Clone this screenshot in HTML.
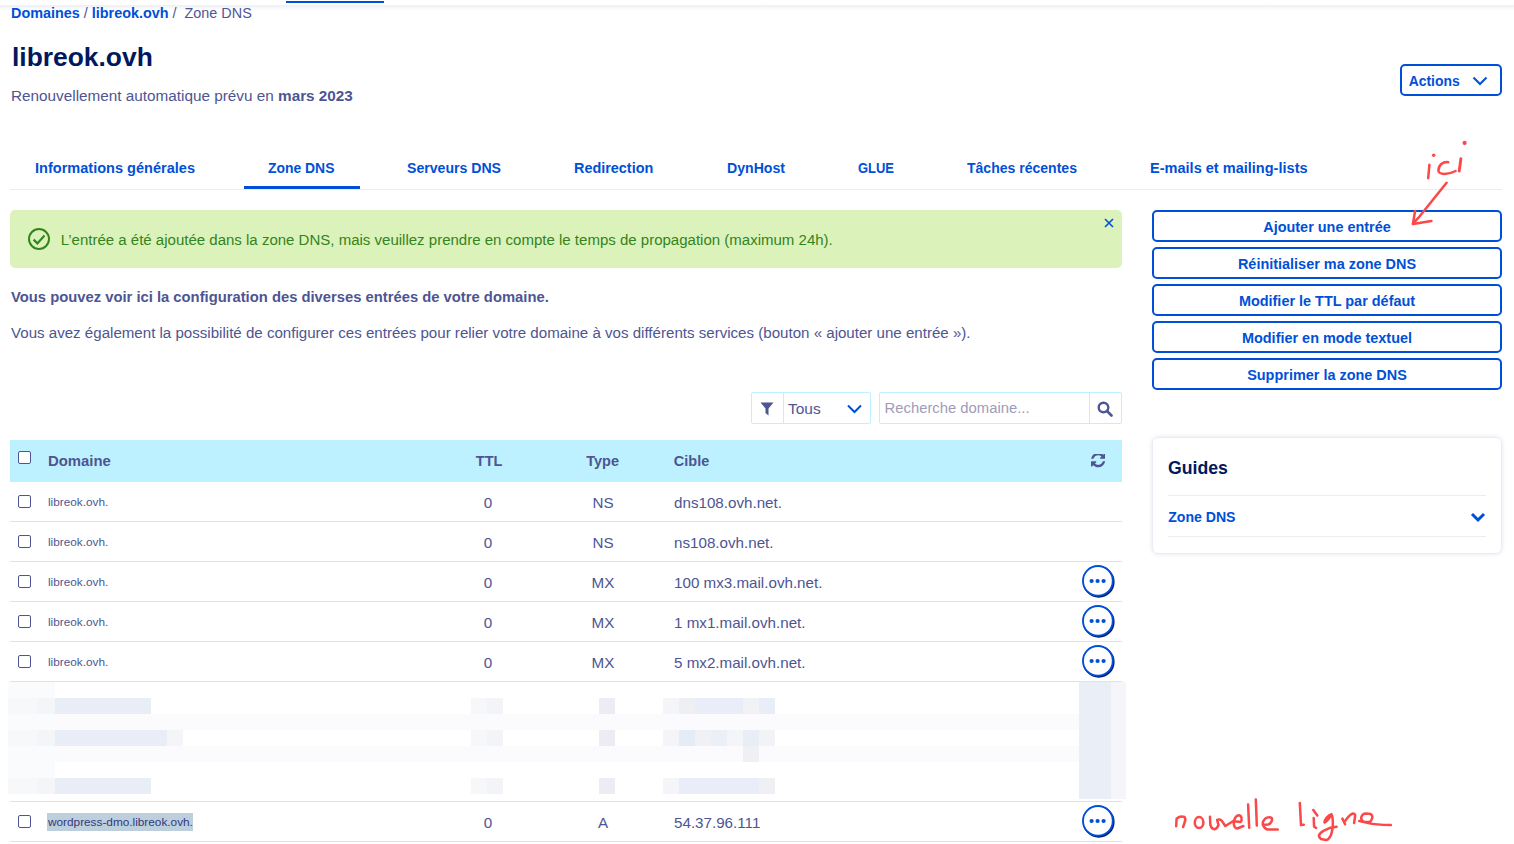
<!DOCTYPE html>
<html><head><meta charset="utf-8"><style>
html,body{margin:0;padding:0;background:#fff;width:1514px;height:844px;overflow:hidden;}
body{font-family:"Liberation Sans",sans-serif;color:#4d5592;position:relative;}
.t{position:absolute;white-space:nowrap;}
.b{position:absolute;}
b{font-weight:700;}
</style></head><body>
<div class="b" style="left:286px;top:1px;width:98px;height:2px;background:#0050d7;"></div>
<div class="b" style="left:0px;top:5px;width:1514px;height:5px;background:linear-gradient(#edeff4,#ffffff);"></div>
<div class="t" style="left:11px;top:5.81px;font-size:14.4px;line-height:14.4px;"><span style="color:#0050d7;font-weight:700">Domaines</span> / <span style="color:#0050d7;font-weight:700">libreok.ovh</span> /&nbsp; Zone DNS</div>
<div class="t" style="left:12px;top:44.35px;font-size:26.4px;line-height:26.4px;font-weight:700;color:#00185e;">libreok.ovh</div>
<div class="t" style="left:11px;top:87.75px;font-size:15.3px;line-height:15.3px;">Renouvellement automatique prévu en <b>mars 2023</b></div>
<div class="b" style="left:1400px;top:64px;width:102px;height:32px;border:2px solid #0050d7;border-radius:5px;box-sizing:border-box;"></div>
<div class="t" style="left:1408.7px;top:75.23px;font-size:13.9px;line-height:13.9px;font-weight:700;color:#0050d7;">Actions</div>
<svg class="b" style="left:1472px;top:76px" width="16" height="10" viewBox="0 0 16 10"><path d="M1.5 1.5 L8 8 L14.5 1.5" fill="none" stroke="#0050d7" stroke-width="2"/></svg>
<div class="t" style="left:35.0px;top:160.90px;font-size:14.3px;line-height:14.3px;font-weight:700;color:#0050d7;transform:scaleX(1.017);transform-origin:0 0;">Informations générales</div>
<div class="t" style="left:268.0px;top:160.90px;font-size:14.3px;line-height:14.3px;font-weight:700;color:#0050d7;transform:scaleX(0.972);transform-origin:0 0;">Zone DNS</div>
<div class="t" style="left:407.29999999999995px;top:160.90px;font-size:14.3px;line-height:14.3px;font-weight:700;color:#0050d7;transform:scaleX(0.986);transform-origin:0 0;">Serveurs DNS</div>
<div class="t" style="left:574.4px;top:160.90px;font-size:14.3px;line-height:14.3px;font-weight:700;color:#0050d7;transform:scaleX(1.008);transform-origin:0 0;">Redirection</div>
<div class="t" style="left:727.4px;top:160.90px;font-size:14.3px;line-height:14.3px;font-weight:700;color:#0050d7;transform:scaleX(0.987);transform-origin:0 0;">DynHost</div>
<div class="t" style="left:858.1px;top:160.90px;font-size:14.3px;line-height:14.3px;font-weight:700;color:#0050d7;transform:scaleX(0.906);transform-origin:0 0;">GLUE</div>
<div class="t" style="left:967.4px;top:160.90px;font-size:14.3px;line-height:14.3px;font-weight:700;color:#0050d7;transform:scaleX(0.981);transform-origin:0 0;">Tâches récentes</div>
<div class="t" style="left:1150.2px;top:160.90px;font-size:14.3px;line-height:14.3px;font-weight:700;color:#0050d7;transform:scaleX(1.017);transform-origin:0 0;">E-mails et mailing-lists</div>
<div class="b" style="left:10px;top:189px;width:1492px;height:1px;background:#e8ecf4;"></div>
<div class="b" style="left:244px;top:186px;width:116px;height:3px;background:#0050d7;"></div>
<div class="b" style="left:10px;top:210px;width:1112px;height:58px;background:#dcf2bb;border-radius:5px;"></div>
<svg class="b" style="left:27px;top:227px" width="24" height="24" viewBox="0 0 24 24"><circle cx="12" cy="12" r="10" fill="none" stroke="#34841c" stroke-width="2"/><path d="M6.6 12.6 L10.4 16.4 L17.5 8.6" fill="none" stroke="#34841c" stroke-width="2.2"/></svg>
<div class="t" style="left:60.7px;top:231.78px;font-size:15.03px;line-height:15.03px;color:#34841c;">L’entrée a été ajoutée dans la zone DNS, mais veuillez prendre en compte le temps de propagation (maximum 24h).</div>
<svg class="b" style="left:1104px;top:218px" width="10" height="10" viewBox="0 0 10 10"><path d="M1 1 L9 9 M9 1 L1 9" fill="none" stroke="#0050d7" stroke-width="1.6"/></svg>
<div class="t" style="left:11px;top:290.48px;font-size:14.79px;line-height:14.79px;font-weight:700;">Vous pouvez voir ici la configuration des diverses entrées de votre domaine.</div>
<div class="t" style="left:11px;top:324.82px;font-size:15.1px;line-height:15.1px;">Vous avez également la possibilité de configurer ces entrées pour relier votre domaine à vos différents services (bouton « ajouter une entrée »).</div>
<div class="b" style="left:1152px;top:210px;width:350px;height:32px;border:2px solid #0050d7;border-radius:5px;box-sizing:border-box;"></div>
<div class="t" style="left:927px;width:800px;text-align:center;top:219.77px;font-size:14.45px;line-height:14.45px;font-weight:700;color:#0050d7;">Ajouter une entrée</div>
<div class="b" style="left:1152px;top:247px;width:350px;height:32px;border:2px solid #0050d7;border-radius:5px;box-sizing:border-box;"></div>
<div class="t" style="left:927px;width:800px;text-align:center;top:256.77px;font-size:14.45px;line-height:14.45px;font-weight:700;color:#0050d7;">Réinitialiser ma zone DNS</div>
<div class="b" style="left:1152px;top:284px;width:350px;height:32px;border:2px solid #0050d7;border-radius:5px;box-sizing:border-box;"></div>
<div class="t" style="left:927px;width:800px;text-align:center;top:293.77px;font-size:14.45px;line-height:14.45px;font-weight:700;color:#0050d7;">Modifier le TTL par défaut</div>
<div class="b" style="left:1152px;top:321px;width:350px;height:32px;border:2px solid #0050d7;border-radius:5px;box-sizing:border-box;"></div>
<div class="t" style="left:927px;width:800px;text-align:center;top:330.77px;font-size:14.45px;line-height:14.45px;font-weight:700;color:#0050d7;">Modifier en mode textuel</div>
<div class="b" style="left:1152px;top:358px;width:350px;height:32px;border:2px solid #0050d7;border-radius:5px;box-sizing:border-box;"></div>
<div class="t" style="left:927px;width:800px;text-align:center;top:367.77px;font-size:14.45px;line-height:14.45px;font-weight:700;color:#0050d7;">Supprimer la zone DNS</div>
<div class="b" style="left:751px;top:392px;width:120px;height:32px;border:1px solid #bef1ff;box-sizing:border-box;border-radius:2px;"></div>
<div class="b" style="left:783px;top:392px;width:1px;height:32px;background:#bef1ff;"></div>
<svg class="b" style="left:760px;top:402px" width="14" height="14" viewBox="0 0 14 14"><path d="M0.5 0.5 H13.5 L8.5 6.5 V13.5 L5.5 11 V6.5 Z" fill="#4d5592"/></svg>
<div class="t" style="left:788px;top:400.98px;font-size:15.5px;line-height:15.5px;">Tous</div>
<svg class="b" style="left:847px;top:404px" width="15" height="10" viewBox="0 0 15 10"><path d="M1 1.5 L7.5 8 L14 1.5" fill="none" stroke="#0050d7" stroke-width="2"/></svg>
<div class="b" style="left:879px;top:392px;width:243px;height:32px;border:1px solid #bef1ff;box-sizing:border-box;border-radius:2px;"></div>
<div class="b" style="left:1089px;top:392px;width:1px;height:32px;background:#bef1ff;"></div>
<div class="t" style="left:884.6px;top:401.45px;font-size:14.82px;line-height:14.82px;color:#a09cb8;">Recherche domaine...</div>
<svg class="b" style="left:1097px;top:401px" width="16" height="16" viewBox="0 0 16 16"><circle cx="6.5" cy="6.5" r="4.8" fill="none" stroke="#4d5592" stroke-width="2.4"/><path d="M10 10 L14.5 14.5" stroke="#4d5592" stroke-width="2.6" stroke-linecap="round"/></svg>
<div class="b" style="left:10px;top:440px;width:1112px;height:42px;background:#bef1ff;"></div>
<div class="b" style="left:18px;top:451px;width:13px;height:13px;border:1px solid #4d5592;border-radius:2px;box-sizing:border-box;background:#fff;"></div>
<div class="t" style="left:48px;top:453.69px;font-size:14.9px;line-height:14.9px;font-weight:700;">Domaine</div>
<div class="t" style="left:475.8px;top:453.53px;font-size:14.5px;line-height:14.5px;font-weight:700;">TTL</div>
<div class="t" style="left:586.2px;top:453.53px;font-size:14.5px;line-height:14.5px;font-weight:700;">Type</div>
<div class="t" style="left:673.8px;top:453.53px;font-size:14.5px;line-height:14.5px;font-weight:700;">Cible</div>
<svg class="b" style="left:1090.5px;top:453.8px" width="14.4" height="13.8" viewBox="0 128 1536 1472"><path fill="#4d5592" d="M1511 928q0 5-1 7-64 268-268 434.5t-478 166.5q-146 0-282.5-55t-243.5-157l-129 129q-19 19-45 19t-45-19-19-45v-448q0-26 19-45t45-19h448q26 0 45 19t19 45-19 45l-137 137q71 66 161 102t187 36q134 0 250-65t186-179q11-17 53-117 8-23 30-23h192q13 0 22.5 9.5t9.5 22.5zm25-800v448q0 26-19 45t-45 19h-448q-26 0-45-19t-19-45 19-45l138-138q-148-137-349-137-134 0-250 65t-186 179q-11 17-53 117-8 23-30 23h-199q-13 0-22.5-9.5t-9.5-22.5v-7q65-268 270-434.5t480-166.5q146 0 284 55.5t245 156.5l130-129q19-19 45-19t45 19 19 45z"/></svg>
<div class="b" style="left:18px;top:495px;width:13px;height:13px;border:1px solid #4d5592;border-radius:2px;box-sizing:border-box;"></div>
<div class="t" style="left:48px;top:496.61px;font-size:11.8px;line-height:11.8px;">libreok.ovh.</div>
<div class="t" style="left:88px;width:800px;text-align:center;top:494.93px;font-size:15.2px;line-height:15.2px;">0</div>
<div class="t" style="left:203px;width:800px;text-align:center;top:494.93px;font-size:15.2px;line-height:15.2px;">NS</div>
<div class="t" style="left:674px;top:494.95px;font-size:15.18px;line-height:15.18px;">dns108.ovh.net.</div>
<div class="b" style="left:10px;top:521px;width:1112px;height:1px;background:#bef1ff;"></div>
<div class="b" style="left:18px;top:535px;width:13px;height:13px;border:1px solid #4d5592;border-radius:2px;box-sizing:border-box;"></div>
<div class="t" style="left:48px;top:536.61px;font-size:11.8px;line-height:11.8px;">libreok.ovh.</div>
<div class="t" style="left:88px;width:800px;text-align:center;top:534.93px;font-size:15.2px;line-height:15.2px;">0</div>
<div class="t" style="left:203px;width:800px;text-align:center;top:534.93px;font-size:15.2px;line-height:15.2px;">NS</div>
<div class="t" style="left:674px;top:534.95px;font-size:15.18px;line-height:15.18px;">ns108.ovh.net.</div>
<div class="b" style="left:10px;top:561px;width:1112px;height:1px;background:#bef1ff;"></div>
<div class="b" style="left:18px;top:575px;width:13px;height:13px;border:1px solid #4d5592;border-radius:2px;box-sizing:border-box;"></div>
<div class="t" style="left:48px;top:576.61px;font-size:11.8px;line-height:11.8px;">libreok.ovh.</div>
<div class="t" style="left:88px;width:800px;text-align:center;top:574.93px;font-size:15.2px;line-height:15.2px;">0</div>
<div class="t" style="left:203px;width:800px;text-align:center;top:574.93px;font-size:15.2px;line-height:15.2px;">MX</div>
<div class="t" style="left:674px;top:574.95px;font-size:15.18px;line-height:15.18px;">100 mx3.mail.ovh.net.</div>
<div class="b" style="left:10px;top:601px;width:1112px;height:1px;background:#bef1ff;"></div>
<svg class="b" style="left:1081px;top:564px" width="36" height="36" viewBox="0 0 36 36"><circle cx="17.8" cy="17.9" r="14.8" fill="none" stroke="#00185e" stroke-width="2"/><circle cx="16.9" cy="16.9" r="14.9" fill="#fff" stroke="#0050d7" stroke-width="1.9"/><circle cx="10.6" cy="17" r="2.1" fill="#0050d7"/><circle cx="16.6" cy="17" r="2.1" fill="#0050d7"/><circle cx="22.6" cy="17" r="2.1" fill="#0050d7"/></svg>
<div class="b" style="left:18px;top:615px;width:13px;height:13px;border:1px solid #4d5592;border-radius:2px;box-sizing:border-box;"></div>
<div class="t" style="left:48px;top:616.61px;font-size:11.8px;line-height:11.8px;">libreok.ovh.</div>
<div class="t" style="left:88px;width:800px;text-align:center;top:614.93px;font-size:15.2px;line-height:15.2px;">0</div>
<div class="t" style="left:203px;width:800px;text-align:center;top:614.93px;font-size:15.2px;line-height:15.2px;">MX</div>
<div class="t" style="left:674px;top:614.95px;font-size:15.18px;line-height:15.18px;">1 mx1.mail.ovh.net.</div>
<div class="b" style="left:10px;top:641px;width:1112px;height:1px;background:#bef1ff;"></div>
<svg class="b" style="left:1081px;top:604px" width="36" height="36" viewBox="0 0 36 36"><circle cx="17.8" cy="17.9" r="14.8" fill="none" stroke="#00185e" stroke-width="2"/><circle cx="16.9" cy="16.9" r="14.9" fill="#fff" stroke="#0050d7" stroke-width="1.9"/><circle cx="10.6" cy="17" r="2.1" fill="#0050d7"/><circle cx="16.6" cy="17" r="2.1" fill="#0050d7"/><circle cx="22.6" cy="17" r="2.1" fill="#0050d7"/></svg>
<div class="b" style="left:18px;top:655px;width:13px;height:13px;border:1px solid #4d5592;border-radius:2px;box-sizing:border-box;"></div>
<div class="t" style="left:48px;top:656.61px;font-size:11.8px;line-height:11.8px;">libreok.ovh.</div>
<div class="t" style="left:88px;width:800px;text-align:center;top:654.93px;font-size:15.2px;line-height:15.2px;">0</div>
<div class="t" style="left:203px;width:800px;text-align:center;top:654.93px;font-size:15.2px;line-height:15.2px;">MX</div>
<div class="t" style="left:674px;top:654.95px;font-size:15.18px;line-height:15.18px;">5 mx2.mail.ovh.net.</div>
<div class="b" style="left:10px;top:681px;width:1112px;height:1px;background:#bef1ff;"></div>
<svg class="b" style="left:1081px;top:644px" width="36" height="36" viewBox="0 0 36 36"><circle cx="17.8" cy="17.9" r="14.8" fill="none" stroke="#00185e" stroke-width="2"/><circle cx="16.9" cy="16.9" r="14.9" fill="#fff" stroke="#0050d7" stroke-width="1.9"/><circle cx="10.6" cy="17" r="2.1" fill="#0050d7"/><circle cx="16.6" cy="17" r="2.1" fill="#0050d7"/><circle cx="22.6" cy="17" r="2.1" fill="#0050d7"/></svg>
<div class="b" style="left:8px;top:714px;width:1118px;height:16px;background:#fbfbfd;"></div>
<div class="b" style="left:8px;top:746px;width:1118px;height:16px;background:#fbfbfd;"></div>
<div class="b" style="left:8px;top:682px;width:47px;height:112px;background:#fafbfc;"></div>
<div class="b" style="left:8px;top:698px;width:47px;height:16px;background:#f7f8fa;"></div>
<div class="b" style="left:38px;top:698px;width:17px;height:16px;background:#f4f5f8;"></div>
<div class="b" style="left:55px;top:698px;width:96px;height:16px;background:#e9edf6;"></div>
<div class="b" style="left:471px;top:698px;width:16px;height:16px;background:#f6f7f9;"></div>
<div class="b" style="left:487px;top:698px;width:16px;height:16px;background:#f3f4f7;"></div>
<div class="b" style="left:599px;top:698px;width:16px;height:16px;background:#ebedf3;"></div>
<div class="b" style="left:663px;top:698px;width:16px;height:16px;background:#f4f5f8;"></div>
<div class="b" style="left:8px;top:730px;width:47px;height:16px;background:#f7f8fa;"></div>
<div class="b" style="left:38px;top:730px;width:17px;height:16px;background:#f4f5f8;"></div>
<div class="b" style="left:55px;top:730px;width:96px;height:16px;background:#e9edf6;"></div>
<div class="b" style="left:471px;top:730px;width:16px;height:16px;background:#f6f7f9;"></div>
<div class="b" style="left:487px;top:730px;width:16px;height:16px;background:#f3f4f7;"></div>
<div class="b" style="left:599px;top:730px;width:16px;height:16px;background:#ebedf3;"></div>
<div class="b" style="left:663px;top:730px;width:16px;height:16px;background:#f4f5f8;"></div>
<div class="b" style="left:8px;top:778px;width:47px;height:16px;background:#f7f8fa;"></div>
<div class="b" style="left:38px;top:778px;width:17px;height:16px;background:#f4f5f8;"></div>
<div class="b" style="left:55px;top:778px;width:96px;height:16px;background:#e9edf6;"></div>
<div class="b" style="left:471px;top:778px;width:16px;height:16px;background:#f6f7f9;"></div>
<div class="b" style="left:487px;top:778px;width:16px;height:16px;background:#f3f4f7;"></div>
<div class="b" style="left:599px;top:778px;width:16px;height:16px;background:#ebedf3;"></div>
<div class="b" style="left:663px;top:778px;width:16px;height:16px;background:#f4f5f8;"></div>
<div class="b" style="left:151px;top:730px;width:16px;height:16px;background:#e9edf6;"></div>
<div class="b" style="left:167px;top:730px;width:16px;height:16px;background:#f4f5f8;"></div>
<div class="b" style="left:679px;top:698px;width:16px;height:16px;background:#eeeff3;"></div>
<div class="b" style="left:695px;top:698px;width:16px;height:16px;background:#e8edf7;"></div>
<div class="b" style="left:711px;top:698px;width:16px;height:16px;background:#e8edf7;"></div>
<div class="b" style="left:727px;top:698px;width:16px;height:16px;background:#e8edf7;"></div>
<div class="b" style="left:743px;top:698px;width:16px;height:16px;background:#f1f2f6;"></div>
<div class="b" style="left:759px;top:698px;width:16px;height:16px;background:#e8edf7;"></div>
<div class="b" style="left:679px;top:730px;width:16px;height:16px;background:#e6ecf7;"></div>
<div class="b" style="left:695px;top:730px;width:16px;height:16px;background:#eff1f5;"></div>
<div class="b" style="left:711px;top:730px;width:16px;height:16px;background:#ebeff6;"></div>
<div class="b" style="left:727px;top:730px;width:16px;height:16px;background:#f4f5f8;"></div>
<div class="b" style="left:743px;top:730px;width:16px;height:16px;background:#e9edf5;"></div>
<div class="b" style="left:759px;top:730px;width:16px;height:16px;background:#f2f3f7;"></div>
<div class="b" style="left:679px;top:778px;width:16px;height:16px;background:#e8edf7;"></div>
<div class="b" style="left:695px;top:778px;width:16px;height:16px;background:#e8edf7;"></div>
<div class="b" style="left:711px;top:778px;width:16px;height:16px;background:#e8edf7;"></div>
<div class="b" style="left:727px;top:778px;width:16px;height:16px;background:#e8edf7;"></div>
<div class="b" style="left:743px;top:778px;width:16px;height:16px;background:#e8edf7;"></div>
<div class="b" style="left:759px;top:778px;width:16px;height:16px;background:#eff0f4;"></div>
<div class="b" style="left:743px;top:746px;width:16px;height:16px;background:#eef0f4;"></div>
<div class="b" style="left:1079px;top:682px;width:32px;height:117px;background:#eaeff7;"></div>
<div class="b" style="left:1111px;top:682px;width:15px;height:117px;background:#f5f6f9;"></div>
<div class="b" style="left:10px;top:801px;width:1112px;height:1px;background:#bef1ff;"></div>
<div class="b" style="left:18px;top:815px;width:13px;height:13px;border:1px solid #4d5592;border-radius:2px;box-sizing:border-box;"></div>
<div class="b" style="left:47px;top:813px;width:146px;height:18px;background:#bdcedd;"></div>
<div class="t" style="left:48px;top:816.61px;font-size:11.8px;line-height:11.8px;color:#323a78;">wordpress-dmo.libreok.ovh.</div>
<div class="t" style="left:88px;width:800px;text-align:center;top:814.93px;font-size:15.2px;line-height:15.2px;">0</div>
<div class="t" style="left:203px;width:800px;text-align:center;top:814.93px;font-size:15.2px;line-height:15.2px;">A</div>
<div class="t" style="left:674px;top:814.95px;font-size:15.18px;line-height:15.18px;">54.37.96.111</div>
<div class="b" style="left:10px;top:841px;width:1112px;height:1px;background:#bef1ff;"></div>
<svg class="b" style="left:1081px;top:804px" width="36" height="36" viewBox="0 0 36 36"><circle cx="17.8" cy="17.9" r="14.8" fill="none" stroke="#00185e" stroke-width="2"/><circle cx="16.9" cy="16.9" r="14.9" fill="#fff" stroke="#0050d7" stroke-width="1.9"/><circle cx="10.6" cy="17" r="2.1" fill="#0050d7"/><circle cx="16.6" cy="17" r="2.1" fill="#0050d7"/><circle cx="22.6" cy="17" r="2.1" fill="#0050d7"/></svg>
<div class="b" style="left:1152px;top:437px;width:350px;height:117px;border:1px solid #e9ecf3;border-radius:6px;box-sizing:border-box;box-shadow:0 0 4px rgba(190,198,222,0.45);"></div>
<div class="t" style="left:1168.2px;top:457.92px;font-size:19px;line-height:19px;font-weight:700;color:#00185e;transform:scaleX(0.93);transform-origin:0 0;">Guides</div>
<div class="b" style="left:1168px;top:495px;width:318px;height:1px;background:#eceef3;"></div>
<div class="t" style="left:1168.2px;top:509.76px;font-size:14.1px;line-height:14.1px;font-weight:700;color:#0050d7;">Zone DNS</div>
<div class="b" style="left:1168px;top:536px;width:318px;height:1px;background:#eceef3;"></div>
<svg class="b" style="left:1470px;top:511px" width="16" height="12" viewBox="0 0 16 12"><path d="M2 3 L8 9 L14 3" fill="none" stroke="#0050d7" stroke-width="3"/></svg>
<svg class="b" style="left:0;top:0" width="1514" height="844" viewBox="0 0 1514 844">
<g fill="none" stroke="#fb4848" stroke-width="2.5" stroke-linecap="round" stroke-linejoin="round">
<path d="M1429.4 164.8 L1428.2 178.2"/>
<path d="M1448.3 162.2 C1443 161.5 1438.5 165 1438.4 170.5 C1438.8 175 1448 175 1455.6 171"/>
<path d="M1460.9 158.6 L1459.2 171" stroke-width="2.9"/>
<path d="M1446.6 182.8 L1418.5 217.7 L1412.9 223.9"/>
<path d="M1415.1 211 L1412.9 223.9 L1431.4 221.1"/>
<path d="M1176.2 826.2 L1176.6 818.6 C1179 816.5 1182 816 1184.5 817 C1186 818.5 1185.5 820.5 1183.1 827"/>
<ellipse cx="1199.1" cy="822.6" rx="4.3" ry="5.5"/>
<path d="M1210 816.7 L1210.3 824.9 Q1211.8 829.5 1214.6 829.2 Q1217.6 828.3 1218.5 824.9 L1217.1 819.9 Q1219.5 818.8 1221.7 820.6 L1225.3 826 L1233.4 821 L1240.5 822 C1242.5 820 1241.8 815.3 1238.8 815.3 C1236 815.5 1233.8 819 1233.8 822.8 C1233.6 826 1235 828.5 1237.4 828.5 L1243.4 826"/>
<path d="M1248.1 804.4 L1249.2 827.7"/>
<path d="M1255.8 799.4 L1256.8 825.5"/>
<path d="M1262.7 824.8 L1268.3 824.5 C1271 823.5 1272.5 820.5 1271.9 818.3 C1271 817 1268.9 817.2 1268.9 817.2 C1266 817.4 1264 819.5 1263 821.8 C1262.5 824 1263.3 825.7 1263.3 825.7 C1264.5 828 1266 829.5 1267.7 829.5 L1277.8 829.5"/>
<path d="M1299.8 802.9 L1301 825.1 L1303.8 824.7"/>
<path d="M1313.3 810.1 L1317.3 815.6"/>
<path d="M1313.7 818 L1314.1 826.7 L1316.1 827.9"/>
<path d="M1331.5 814.3 C1328 815.5 1324.5 819 1324.5 822.6 C1327.5 821 1330 817 1331.5 814.3 C1333 817 1333.2 821 1332.6 828.6 L1331 835.1 C1329.5 838 1328 840 1326 840.1 L1321 839.1 C1319 837.5 1318.8 836 1319 835.1 C1320 833 1321.5 832 1323 831.1 C1326 829.5 1329.5 828.1 1329.5 828.1 L1336.6 826.8"/>
<path d="M1342.4 818.6 L1345.1 824.1 M1345.1 821.1 C1347.5 817.5 1350.5 814 1353.1 813.5 C1355 813.6 1355.3 815 1355.1 816 L1354.1 823.1"/>
<path d="M1359.2 821.1 L1364.2 822.1 C1362 821 1361 819 1361.2 817.5 C1362 814.5 1364 813.5 1366 813.5 L1370.7 814 C1372 815 1372.5 817 1372.2 818 C1371.5 820.5 1370 822 1369.2 822.1 L1364.2 822.1 L1368.2 823.1 C1372 824 1376 824.8 1390.8 825.1"/>
</g>
<g fill="#fb4848"><circle cx="1433.7" cy="155.3" r="1.7"/><circle cx="1464.6" cy="142.9" r="2.1"/><path d="M1324.2 822.8 C1323.5 819 1328 815 1331.2 814.5 C1329 818 1327 822 1324.2 822.8 Z"/></g>
</svg>
</body></html>
